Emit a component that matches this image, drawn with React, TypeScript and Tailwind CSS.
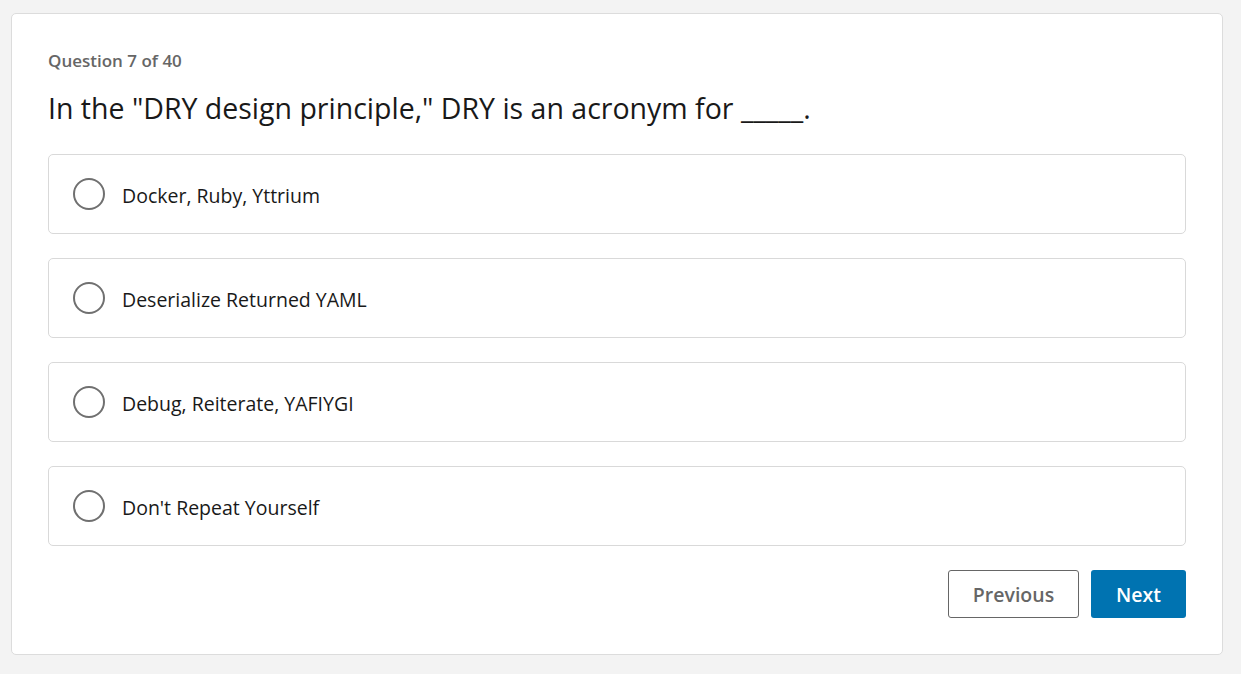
const options = [
  'Docker, Ruby, Yttrium',
  'Deserialize Returned YAML',
  'Debug, Reiterate, YAFIYGI',
  "Don't Repeat Yourself",
]

export default function App() {
  return (
    <div className="min-h-[674px] bg-[#f3f3f3] pt-[13px] pl-[11px] font-['Open_Sans',sans-serif]">
      <div className="w-[1212px] h-[642px] bg-white border border-[#dcdcdc] rounded-[5px] px-[36px] pt-[35px]">
        <div className="text-[17px] leading-[24px] font-semibold text-[#666666]">Question 7 of 40</div>
        <h1 className="mt-[15px] text-[28.5px] leading-[40px] text-[#191919]">
          In the "DRY design principle," DRY is an acronym for _____.
        </h1>

        <div className="mt-[26px] flex flex-col gap-[24px]">
          {options.map((opt) => (
            <label
              key={opt}
              className="h-[80px] flex items-center border border-[#d9d9d9] rounded-[5px] pl-[24px] cursor-pointer"
            >
              <span className="w-[32px] h-[32px] rounded-full border-2 border-[#707070] shrink-0" />
              <span className="ml-[17px] pt-[4px] text-[19.5px] text-[#191919]">{opt}</span>
            </label>
          ))}
        </div>

        <div className="mt-[24px] flex justify-end gap-[12px]">
          <button className="w-[131px] h-[48px] pt-[2px] border border-[#666666] rounded-[3px] text-[19.5px] font-semibold text-[#666666] bg-white">
            Previous
          </button>
          <button className="w-[95px] h-[48px] pt-[2px] rounded-[3px] text-[19.5px] font-semibold text-white bg-[#0073b1]">
            Next
          </button>
        </div>
      </div>
    </div>
  )
}
